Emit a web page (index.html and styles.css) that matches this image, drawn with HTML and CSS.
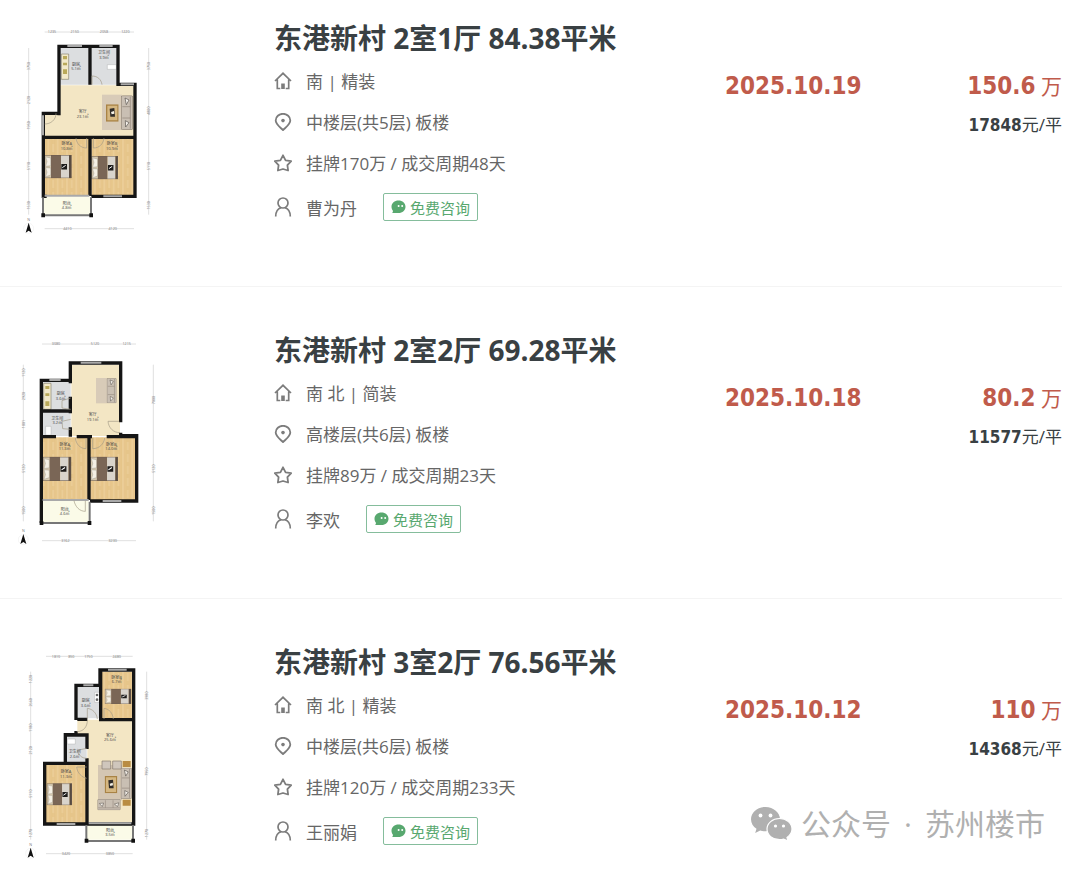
FILE: index.html
```html
<!DOCTYPE html>
<html lang="zh-CN">
<head>
    <meta charset="UTF-8">
    <meta name="viewport" content="width=device-width, initial-scale=1">
    <title>东港新村 成交记录</title>
    <link rel="stylesheet" href="styles.css">
</head>
<body>
<!-- 公用图形 -->
<svg class="defs" width="0" height="0" aria-hidden="true">
    <symbol id="i-house" viewBox="0 0 18 18">
        <path d="M1 9 9 1.3 17 9M3.3 7.6v8.9h3M14.7 7.6v8.9h-3" fill="none" stroke="currentColor" stroke-width="1.7"/>
        <path d="M7.2 17v-5.5h3.6V17z" fill="currentColor"/>
    </symbol>
    <symbol id="i-pin" viewBox="0 0 18 18">
        <path d="M9 17.2C5.5 13.7 1.7 10.9 1.7 7.5a7.3 6.7 0 0 1 14.6 0c0 3.400-3.800 6.200-7.300 9.700z" fill="none" stroke="currentColor" stroke-width="1.8"/>
        <circle cx="9" cy="7.600" r="1.800" fill="currentColor"/>
    </symbol>
    <symbol id="i-star" viewBox="0 0 18 18">
        <path d="M9 1.300 11.600 6.300 17.200 7.200 13.400 11.200 14.100 16.500 9 15 3.900 16.500 4.600 11.200 .8 7.200 6.400 6.300z" fill="none" stroke="currentColor" stroke-width="1.8" stroke-linejoin="round"/>
    </symbol>
    <symbol id="i-user" viewBox="0 0 18 20">
        <circle cx="9" cy="6" r="5" fill="none" stroke="currentColor" stroke-width="1.700"/>
        <path d="M1.700 19.500c0-5 2.600-8 5.300-8.800M16.300 19.500c0-5-2.600-8-5.300-8.800" fill="none" stroke="currentColor" stroke-width="1.700"/>
    </symbol>
    <symbol id="i-chat" viewBox="0 0 15 14">
        <path d="M7.500 .5C11.500 .5 14.500 3.200 14.500 6.700s-3 6.300-7 6.300H1.200c.7-.8.9-1.400.6-2.400C1 9.500 .5 8.200 .5 6.700 .5 3.200 3.500 .5 7.500 .5z" fill="currentColor"/>
        <circle cx="7.600" cy="6" r="1" fill="#fff"/>
        <circle cx="11.200" cy="6" r="1" fill="#fff"/>
    </symbol>

    <pattern id="wood" width="28" height="36" patternUnits="userSpaceOnUse">
        <path fill="#e7c68b" d="M0 0h28v36H0z"/>
        <path fill="#ebcd97" d="M0 0h7v36H0zM14 12h7v24h-7z"/>
        <path d="M7 0v36M14 0v36M21 0v36M28 0v36" stroke="#e2bf81" stroke-width="1"/>
    </pattern>
    <symbol id="bed" viewBox="0 0 82 72" preserveAspectRatio="none">
        <path fill="#d8cbb2" d="M0 1h22v70H0z"/>
        <path fill="#f4efe4" stroke="#8d8a80" d="M4 6l15 3v24L4 35 8 20zM4 39l15 1v22L4 67l4-14z"/>
        <path fill="#7a6656" d="M20 0h30v72H20z"/>
        <path fill="#d9d4cc" d="M50 0h24v72H50z"/>
        <path fill="#574a41" d="M74 0h8v72h-8z"/>
        <path fill="#1d1b1a" d="M51 28h17v17H51z"/>
        <path d="M54 39l10-7" stroke="#fff" stroke-width="3"/>
        <path fill="none" stroke="#6c5c4e" stroke-width="2" d="M1 1h80v70H1z"/>
    </symbol>
    <symbol id="sofa" viewBox="0 0 36 104" preserveAspectRatio="none">
        <rect x="1" y="1" width="34" height="102" rx="4" fill="#c9bfb3" stroke="#85796d" stroke-width="2"/>
        <path d="M4 34h24M4 68h24M28 4v96" stroke="#8f8377" stroke-width="2"/>
        <path d="M12 8l12 6-8 14zM13 76l11 6-10 13z" fill="#f5f1eb" stroke="#55504b" stroke-width="2"/>
    </symbol>
    <symbol id="table" viewBox="0 0 38 52">
        <path fill="#a98345" d="M0 0h38v52H0z"/>
        <path fill="#d5b781" d="M4 4h30v44H4z"/>
        <path fill="#2f2b28" d="M11 13l14-2 2 26H13z"/>
        <path fill="#f7f3e8" d="M15 23l9-3 1 8-8 2z"/>
    </symbol>
    <symbol id="north" viewBox="0 0 34 48">
        <circle cx="17" cy="31" r="15" fill="none" stroke="#e4e4e4"/>
        <path d="M17 14 26 44 17 38 8 44z" fill="#111"/>
    </symbol>
</svg>

<ul class="deal-list">
    <li class="deal">
        <svg class="plan" viewBox="0 0 480 660" role="img" aria-label="东港新村 2室1厅 户型图">
            <path class="floor" d="M146 196h228v156H104v-70h42z"/>
            <path class="tile" d="M150 82h90v112h-90zM244 82h80v112h-80z"/>
            <path fill="url(#wood)" d="M104 354h134v172H104zM244 354h130v172H244z"/>
            <path class="balcony" d="M100 530h142v54H100z"/>
            <path fill="#f2e9c9" stroke="#88846f" stroke-width="2" d="M154 102h22v76h-22z"/>
            <path fill="#b9a95a" d="M159 108h12v10h-12zM159 128h12v8h-12zM159 148h12v14h-12z"/>
            <path fill="#fff" stroke="#999" d="M292 134h27v14h-27z"/>
            <path fill="#d8cbb8" d="M276 224h60v106h-60z"/>
            <use href="#sofa" x="333" y="226" width="36" height="104"/>
            <use href="#table" x="288" y="253" width="38" height="52"/>
            <use href="#bed" x="103" y="405" width="82" height="70"/>
            <use href="#bed" x="244" y="408" width="80" height="70"/>
            <path class="wall" d="M147 286V79h177v114h51v336H244M147 280h-47v249h10M240 82v112M104 352h270M240 352v176"/>
            <path class="window" d="M172 78h44M268 78h40M332 193h40M104 527h134M280 529h56M99 286v60"/>
            <path class="rail" d="M99 532v54h144v-54"/>
            <path fill="#111" d="M94 580h11v12H94zM238 580h11v12h-11z"/>
            <path class="door" d="M104 312c18 0 34-12 34-32M246 194v-26c16 0 28 10 30 26M230 354v30c-18 0-30-12-32-30M250 354v30c18 0 30-12 32-30"/>
            <g class="room">
                <text x="198" y="138">厨房</text><text x="198" y="151">5.1㎡</text>
                <text x="282" y="103">卫生间</text><text x="282" y="116">3.9㎡</text>
                <text x="218" y="280">客厅</text><text x="218" y="294">23.1㎡</text>
                <text x="170" y="376">卧室A</text><text x="170" y="390">10.8㎡</text>
                <text x="306" y="376">卧室B</text><text x="306" y="390">10.9㎡</text>
                <text x="170" y="554">阳台</text><text x="170" y="568">4.8㎡</text>
            </g>
            <path class="ruler" d="M104 36h268M56 84v500M416 84v500M104 626h268"/>
            <g class="dim">
                <text x="126" y="40">1235</text><text x="194" y="40">2150</text><text x="282" y="40">2058</text><text x="346" y="40">1220</text>
                <text x="172" y="630">4410</text><text x="308" y="630">4120</text>
                <text x="56" y="142" transform="rotate(-90 56 138)">3750</text><text x="56" y="244" transform="rotate(-90 56 240)">2120</text>
                <text x="56" y="320" transform="rotate(-90 56 316)">1950</text><text x="56" y="442" transform="rotate(-90 56 438)">5110</text>
                <text x="56" y="560" transform="rotate(-90 56 556)">1530</text>
                <text x="416" y="142" transform="rotate(-90 416 138)">3750</text><text x="416" y="276" transform="rotate(-90 416 272)">4800</text>
                <text x="416" y="442" transform="rotate(-90 416 438)">5110</text><text x="416" y="560" transform="rotate(-90 416 556)">1530</text>
                <text x="56" y="603">N</text>
            </g>
            <use href="#north" x="39" y="594" width="34" height="48"/>
        </svg>
        <div class="info">
            <h2 class="title"><a href="#">东港新村 2室1厅 84.38平米</a></h2>
            <p class="line"><svg class="icon"><use href="#i-house"/></svg>南 | 精装</p>
            <p class="line"><svg class="icon"><use href="#i-pin"/></svg>中楼层(共5层) 板楼</p>
            <p class="line"><svg class="icon"><use href="#i-star"/></svg>挂牌170万 / 成交周期48天</p>
            <div class="line agent">
                <svg class="icon icon-user"><use href="#i-user"/></svg><a href="#">曹为丹</a>
                <button type="button" class="consult"><svg><use href="#i-chat"/></svg>免费咨询</button>
            </div>
        </div>
        <div class="sale">
            <div class="date">2025.10.19</div>
            <div class="price">
                <div class="total"><b>150.6</b> 万</div>
                <div class="unit"><b>17848</b>元/平</div>
            </div>
        </div>
    </li>

    <li class="deal">
        <svg class="plan" viewBox="0 6 480 660" role="img" aria-label="东港新村 2室2厅 户型图">
            <path class="floor" d="M184 104h146v214H184z"/>
            <path class="tile" d="M98 156h84v86H98zM98 246h84v72H98z"/>
            <path fill="url(#wood)" d="M96 322h138v186H96zM240 322h138v188H240z"/>
            <path class="balcony" d="M96 512h140v64H96z"/>
            <path fill="#f2e9c9" stroke="#88846f" stroke-width="2" d="M101 160h22v78h-22z"/>
            <path fill="#b9a95a" d="M106 168h12v9h-12zM106 190h12v8h-12zM106 214h12v14h-12z"/>
            <path fill="#fff" stroke="#999" d="M107 289h16v26h-16z"/>
            <path fill="#d8cbb8" d="M258 144h34v76h-34z"/>
            <use href="#sofa" x="290" y="144" width="30" height="76"/>
            <use href="#bed" x="98" y="380" width="86" height="73"/>
            <use href="#bed" x="240" y="380" width="84" height="73"/>
            <path class="wall" d="M181 160V99h151v178M332 308v9h48v196H240M181 151H94v428M181 200v50M98 243h84M181 292v28M98 320h40M200 320h46M290 320h90M237 320v190"/>
            <path class="window" d="M212 98h62M118 150h34M98 510h138M278 513h56"/>
            <path class="rail" d="M95 579h144v-64"/>
            <path fill="#111" d="M89 573h11v12H89zM233 573h11v12h-11z"/>
            <path class="door" d="M328 274h-34c2 20 16 34 36 34M182 204l-26 8v22l26 4M182 268l-26 6 2 22 24 2M228 324v32c-18 0-30-14-32-32M248 324v32c20 0 34-14 36-32M226 512v32c-18 0-30-14-34-32"/>
            <g class="room">
                <text x="152" y="196">厨房</text><text x="152" y="210">3.6㎡</text>
                <text x="142" y="269">卫生间</text><text x="142" y="282">3.2㎡</text>
                <text x="248" y="258">客厅</text><text x="248" y="272">19.1㎡</text>
                <text x="164" y="347">卧室A</text><text x="164" y="361">11.3㎡</text>
                <text x="304" y="347">卧室B</text><text x="304" y="361">14.0㎡</text>
                <text x="164" y="542">阳台</text><text x="164" y="556">4.6㎡</text>
            </g>
            <path class="ruler" d="M96 42h282M40 104v470M430 104v470M96 632h282"/>
            <g class="dim">
                <text x="138" y="46">3080</text><text x="255" y="46">5120</text><text x="350" y="46">1215</text>
                <text x="166" y="636">3162</text><text x="308" y="636">3230</text>
                <text x="40" y="132" transform="rotate(-90 40 128)">1120</text><text x="40" y="202" transform="rotate(-90 40 198)">2920</text>
                <text x="40" y="286" transform="rotate(-90 40 282)">1801</text><text x="40" y="420" transform="rotate(-90 40 416)">5120</text>
                <text x="40" y="546" transform="rotate(-90 40 542)">1500</text>
                <text x="430" y="214" transform="rotate(-90 430 210)">7000</text><text x="430" y="420" transform="rotate(-90 430 416)">5120</text>
                <text x="430" y="546" transform="rotate(-90 430 542)">1500</text>
                <text x="40" y="605">N</text>
            </g>
            <use href="#north" x="23" y="598" width="34" height="48"/>
        </svg>
        <div class="info">
            <h2 class="title"><a href="#">东港新村 2室2厅 69.28平米</a></h2>
            <p class="line"><svg class="icon"><use href="#i-house"/></svg>南 北 | 简装</p>
            <p class="line"><svg class="icon"><use href="#i-pin"/></svg>高楼层(共6层) 板楼</p>
            <p class="line"><svg class="icon"><use href="#i-star"/></svg>挂牌89万 / 成交周期23天</p>
            <div class="line agent">
                <svg class="icon icon-user"><use href="#i-user"/></svg><a href="#">李欢</a>
                <button type="button" class="consult"><svg><use href="#i-chat"/></svg>免费咨询</button>
            </div>
        </div>
        <div class="sale">
            <div class="date">2025.10.18</div>
            <div class="price">
                <div class="total"><b>80.2</b> 万</div>
                <div class="unit"><b>11577</b>元/平</div>
            </div>
        </div>
    </li>

    <li class="deal">
        <svg class="plan" viewBox="0 -3 480 660" role="img" aria-label="东港新村 3室2厅 户型图">
            <path class="floor" d="M202 224h166v308H232V268h-30z"/>
            <path class="tile" d="M202 126h68v94h-68zM170 274h60v80h-60z"/>
            <path fill="url(#wood)" d="M274 80h94v140h-94zM108 358h122v176H108z"/>
            <path class="balcony" d="M230 538h138v46H230z"/>
            <path fill="#fff" stroke="#999" d="M172 282h24v15h-24zM254 142h14v30h-14z"/>
            <circle cx="261" cy="150" r="4" fill="#666"/><circle cx="261" cy="164" r="4" fill="#666"/>
            <path fill="#d4c6b2" d="M264 360h72v106h-72z"/>
            <path fill="#cfc6bc" stroke="#85796d" stroke-width="2" d="M276 348h26v24h-26zM308 348h26v24h-26z"/>
            <path fill="#b98c42" d="M338 348h24v18h-24zM338 464h24v18h-24z"/>
            <use href="#sofa" x="332" y="368" width="34" height="94"/>
            <use href="#sofa" x="0" y="0" width="34" height="70" transform="translate(332 462) rotate(90)"/>
            <use href="#table" x="284" y="393" width="38" height="52"/>
            <use href="#bed" x="110" y="415" width="76" height="66"/>
            <use href="#bed" x="284" y="131" width="80" height="46"/>
            <path class="wall" d="M270 124V75h101v462H104V355h126v40M270 121h-72v104M198 258v11h-32v86M166 270h65v42M231 340v60M202 223h30M272 80v144h100M231 396v140"/>
            <path class="window" d="M294 74h56M220 121h30M140 537h56M236 535h128"/>
            <path class="rail" d="M229 540v48h140v-48"/>
            <path fill="#111" d="M224 581h11v12h-11zM364 581h11v12h-11z"/>
            <path class="door" d="M232 222v-32c16 2 28 14 30 32M282 222v-32c16 2 26 14 28 32M232 226c0 20-12 34-32 34M230 310l-28 6c2 14 14 24 28 24M230 366h-30c2 18 14 30 30 34"/>
            <g class="room">
                <text x="320" y="102">卧室B</text><text x="320" y="115">6.7㎡</text>
                <text x="227" y="172">厨房</text><text x="227" y="186">3.6㎡</text>
                <text x="300" y="275">客厅</text><text x="300" y="289">25.6㎡</text>
                <text x="194" y="325">卫生间</text><text x="194" y="338">2.6㎡</text>
                <text x="168" y="385">卧室A</text><text x="168" y="398">11.3㎡</text>
                <text x="300" y="560">阳台</text><text x="300" y="573">3.5㎡</text>
            </g>
            <path class="ruler" d="M108 34h260M62 80v504M410 80v504M108 626h260"/>
            <g class="dim">
                <text x="138" y="38">1810</text><text x="184" y="38">850</text><text x="235" y="38">1750</text><text x="320" y="38">2480</text>
                <text x="168" y="630">3420</text><text x="300" y="630">3850</text>
                <text x="62" y="106" transform="rotate(-90 62 102)">1220</text><text x="62" y="176" transform="rotate(-90 62 172)">2660</text>
                <text x="62" y="252" transform="rotate(-90 62 248)">1180</text><text x="62" y="320" transform="rotate(-90 62 316)">2120</text>
                <text x="62" y="450" transform="rotate(-90 62 446)">5110</text><text x="62" y="568" transform="rotate(-90 62 564)">1270</text>
                <text x="410" y="156" transform="rotate(-90 410 152)">3980</text><text x="410" y="384" transform="rotate(-90 410 380)">7950</text>
                <text x="410" y="568" transform="rotate(-90 410 564)">1270</text>
                <text x="62" y="603">N</text>
            </g>
            <use href="#north" x="45" y="594" width="34" height="48"/>
        </svg>
        <div class="info">
            <h2 class="title"><a href="#">东港新村 3室2厅 76.56平米</a></h2>
            <p class="line"><svg class="icon"><use href="#i-house"/></svg>南 北 | 精装</p>
            <p class="line"><svg class="icon"><use href="#i-pin"/></svg>中楼层(共6层) 板楼</p>
            <p class="line"><svg class="icon"><use href="#i-star"/></svg>挂牌120万 / 成交周期233天</p>
            <div class="line agent">
                <svg class="icon icon-user"><use href="#i-user"/></svg><a href="#">王丽娟</a>
                <button type="button" class="consult"><svg><use href="#i-chat"/></svg>免费咨询</button>
            </div>
        </div>
        <div class="sale">
            <div class="date">2025.10.12</div>
            <div class="price">
                <div class="total"><b>110</b> 万</div>
                <div class="unit"><b>14368</b>元/平</div>
            </div>
        </div>
        <!-- 公众号水印 -->
        <div class="watermark">
            <svg viewBox="0 0 42 36" aria-hidden="true">
                <path d="M15.500 1C7.500 1 1 6.500 1 13.300c0 3.900 2.100 7.300 5.500 9.500L5.200 27l5-2.500c1.700.5 3.500.8 5.300.8 8 0 14.500-5.400 14.500-12S23.500 1 15.500 1z" fill="#b0b0b0"/>
                <circle cx="10.500" cy="9.500" r="1.900" fill="#fff"/><circle cx="20.500" cy="9.500" r="1.900" fill="#fff"/>
                <path d="M29.500 12.500c-7 0-12.500 4.700-12.500 10.600s5.500 10.600 12.500 10.600c1.500 0 2.900-.2 4.200-.6l4.300 2-1-3.600c3.100-2 5-5 5-8.400 0-5.900-5.500-10.600-12.500-10.600z" fill="#b0b0b0" stroke="#fff" stroke-width="1.200"/>
                <circle cx="25.500" cy="20" r="1.600" fill="#fff"/><circle cx="33.500" cy="20" r="1.600" fill="#fff"/>
            </svg>
            <span>公众号</span><span class="dot">·</span><span>苏州楼市</span>
        </div>
    </li>
</ul>
</body>
</html>
```
FILE: styles.css
```css
* {
    box-sizing: border-box;
}

body {
    margin: 0;
    background: #fff;
    color: #666;
    font-family: "Open Sans", "Noto Sans CJK SC", sans-serif;
    font-size: 17px;
}

a {
    color: inherit;
    text-decoration: none;
}

.defs {
    position: absolute;
}

.deal-list {
    list-style: none;
    margin: 0 18px 0 0;
    padding: 0;
}

.deal {
    position: relative;
    display: flex;
    padding: 45px 0 46px 10px;
    border-bottom: 1px solid #f4f4f4;
}

.deal:first-child {
    padding-top: 20px;
}

.deal:last-child {
    padding-bottom: 0;
    border-bottom: none;
}

/* 户型图 */
.plan {
    flex: none;
    width: 160px;
    height: 220px;
    margin-right: 104px;
}

.floor {
    fill: #f3e6c4;
}

.tile {
    fill: #dcdee0;
}

.balcony {
    fill: #fbfbe8;
}

.wall {
    fill: none;
    stroke: #151515;
    stroke-width: 10;
}

.window {
    fill: none;
    stroke: #a9a9a9;
    stroke-width: 6;
}

.rail {
    fill: none;
    stroke: #777;
    stroke-width: 6;
}

.door {
    fill: none;
    stroke: #a39a86;
    stroke-width: 2;
}

.ruler {
    fill: none;
    stroke: #d0d0d0;
    stroke-width: 2;
}

.room {
    fill: #444;
    font-size: 12px;
    text-anchor: middle;
}

.dim {
    fill: #777;
    font-size: 11px;
    text-anchor: middle;
}

/* 房源信息 */
.info {
    flex: 1;
    min-width: 0;
}

.title {
    margin: 0 0 4px;
    color: #394043;
    font-size: 28px;
    line-height: 36px;
    white-space: nowrap;
}

.line {
    display: flex;
    align-items: center;
    height: 41px;
    margin: 0;
    white-space: nowrap;
}

.icon {
    flex: none;
    width: 18px;
    height: 18px;
    margin-right: 14px;
    color: #7c7c7c;
}

.icon-user {
    height: 20px;
}

.agent {
    height: 48px;
}

.consult {
    display: flex;
    align-items: center;
    height: 28px;
    margin-left: 26px;
    padding: 0 7px;
    border: 1px solid #85bd9c;
    border-radius: 2px;
    background: #fff;
    color: #58a86f;
    font-family: inherit;
    font-size: 15px;
    cursor: pointer;
}

.consult svg {
    width: 15px;
    height: 14px;
    margin-right: 4px;
}

/* 成交价 */
.sale {
    display: flex;
    justify-content: space-between;
    width: 337px;
    padding-top: 48px;
}

.date,
.total {
    color: #c05b4b;
    font-size: 24px;
    line-height: 36px;
}

.date,
.sale b {
    font-family: "DejaVu Sans Condensed", "DejaVu Sans", sans-serif;
    font-weight: bold;
}

.price {
    text-align: right;
}

.total {
    font-size: 21px;
}

.total b {
    font-size: 24px;
}

.unit {
    margin-top: 6px;
    color: #394043;
    line-height: 30px;
}

.watermark {
    position: absolute;
    right: 17px;
    bottom: 20px;
    display: flex;
    align-items: center;
    color: #b0b0b0;
    font-size: 30px;
    line-height: 40px;
}

.watermark svg {
    width: 42px;
    height: 36px;
    margin-right: 9px;
}

.dot {
    width: 34px;
    text-align: center;
}
```
